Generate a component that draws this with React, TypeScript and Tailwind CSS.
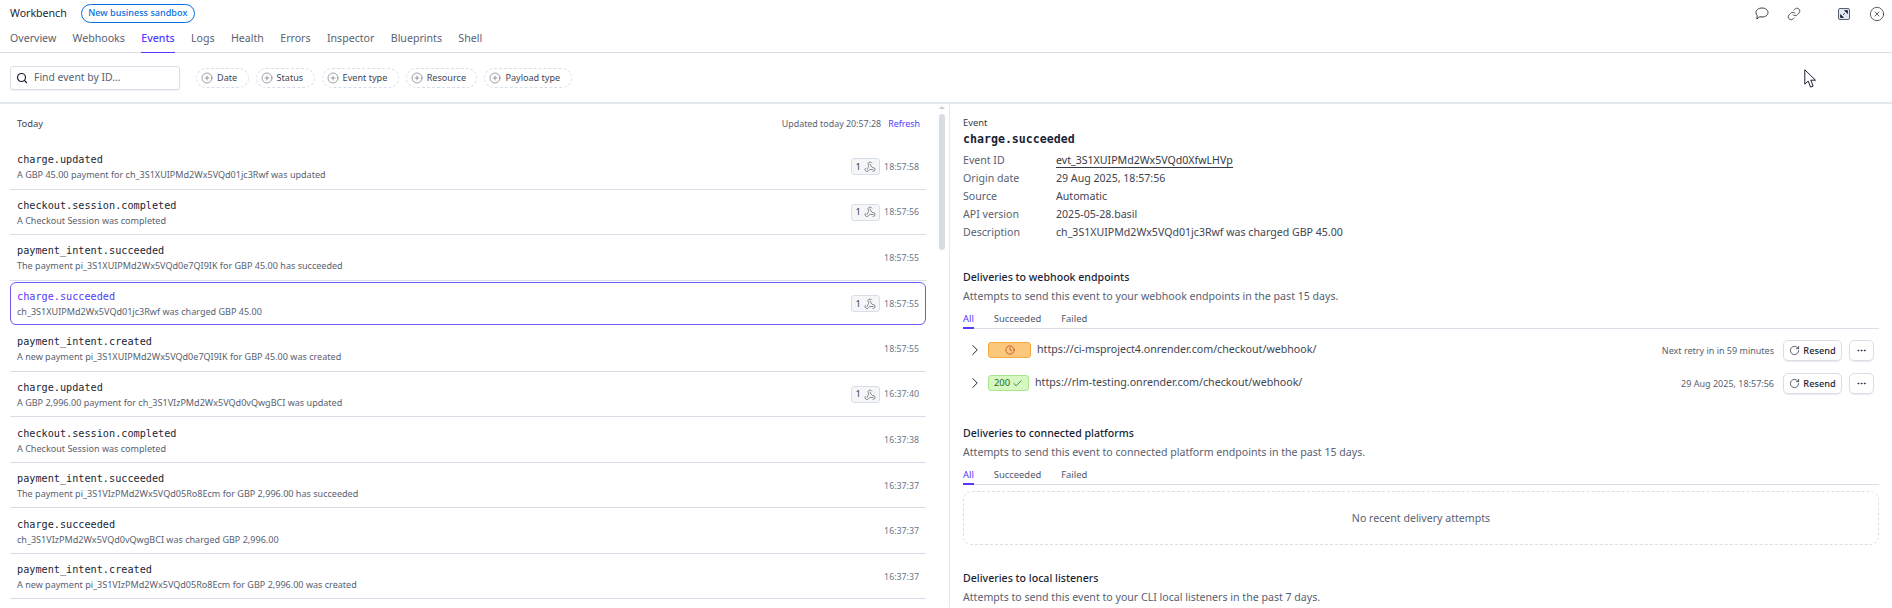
import { Search, CirclePlus, Webhook, ChevronRight, Clock, Check, RotateCw, Ellipsis, Link, CircleX } from "lucide-react";

const tabs = ["Overview", "Webhooks", "Events", "Logs", "Health", "Errors", "Inspector", "Blueprints", "Shell"];
const filters = ["Date", "Status", "Event type", "Resource", "Payload type"];

const events = [
  { name: "charge.updated", desc: "A GBP 45.00 payment for ch_3S1XUIPMd2Wx5VQd01jc3Rwf was updated", time: "18:57:58", hook: true },
  { name: "checkout.session.completed", desc: "A Checkout Session was completed", time: "18:57:56", hook: true },
  { name: "payment_intent.succeeded", desc: "The payment pi_3S1XUIPMd2Wx5VQd0e7QI9IK for GBP 45.00 has succeeded", time: "18:57:55", hook: false },
  { name: "charge.succeeded", desc: "ch_3S1XUIPMd2Wx5VQd01jc3Rwf was charged GBP 45.00", time: "18:57:55", hook: true, active: true },
  { name: "payment_intent.created", desc: "A new payment pi_3S1XUIPMd2Wx5VQd0e7QI9IK for GBP 45.00 was created", time: "18:57:55", hook: false },
  { name: "charge.updated", desc: "A GBP 2,996.00 payment for ch_3S1VIzPMd2Wx5VQd0vQwgBCI was updated", time: "16:37:40", hook: true },
  { name: "checkout.session.completed", desc: "A Checkout Session was completed", time: "16:37:38", hook: false },
  { name: "payment_intent.succeeded", desc: "The payment pi_3S1VIzPMd2Wx5VQd05Ro8Ecm for GBP 2,996.00 has succeeded", time: "16:37:37", hook: false },
  { name: "charge.succeeded", desc: "ch_3S1VIzPMd2Wx5VQd0vQwgBCI was charged GBP 2,996.00", time: "16:37:37", hook: false },
  { name: "payment_intent.created", desc: "A new payment pi_3S1VIzPMd2Wx5VQd05Ro8Ecm for GBP 2,996.00 was created", time: "16:37:37", hook: false },
];

const details = [
  ["Event ID", "evt_3S1XUIPMd2Wx5VQd0XfwLHVp"],
  ["Origin date", "29 Aug 2025, 18:57:56"],
  ["Source", "Automatic"],
  ["API version", "2025-05-28.basil"],
  ["Description", "ch_3S1XUIPMd2Wx5VQd01jc3Rwf was charged GBP 45.00"],
];

function SubTabs() {
  return (
    <div className="flex gap-[20px] h-[20px] border-b border-[#d8dee8] text-[9.4px] leading-[20px] text-[#4f566b]">
      <span className="h-[20px] border-b-2 border-[#533afd] text-[#533afd]">All</span>
      <span>Succeeded</span>
      <span>Failed</span>
    </div>
  );
}

function SectionHead({ title, desc }: { title: string; desc: string }) {
  return (
    <>
      <h3 className="h-[19px] leading-[19px] text-[10.6px] font-medium text-[#1a1f36]">{title}</h3>
      <p className="h-[19px] leading-[19px] text-[10.6px] text-[#596171]">{desc}</p>
    </>
  );
}

function DeliveryRow({ badge, url, meta }: { badge: React.ReactNode; url: string; meta: string }) {
  return (
    <div className="flex items-center h-[33px] pl-[3px] pr-[5px]">
      <ChevronRight size={18} strokeWidth={1.3} className="text-[#1a1f36] mr-[4px] shrink-0" />
      {badge}
      <span className="ml-[6px] text-[10.65px] text-[#414552]">{url}</span>
      <span className="ml-auto text-[9px] text-[#596171]">{meta}</span>
      <button className="ml-[9px] flex items-center gap-[3px] h-[21px] w-[59px] justify-center rounded-[5px] border border-[#d8dee8] shadow-[0_1px_1px_rgba(0,0,0,0.08)] text-[9.2px] text-[#1a1f36] font-medium">
        <RotateCw size={11} strokeWidth={1.5} />
        Resend
      </button>
      <button className="ml-[7px] flex items-center justify-center h-[21px] w-[25px] rounded-[5px] border border-[#d8dee8] shadow-[0_1px_1px_rgba(0,0,0,0.08)] text-[#1a1f36]">
        <Ellipsis size={11} strokeWidth={1.8} />
      </button>
    </div>
  );
}

export default function App() {
  return (
    <div className="relative w-[1892px] h-[608px] overflow-hidden bg-white text-[#353a44] font-['Noto_Sans',sans-serif]">
      {/* header */}
      <header className="h-[53px] border-b border-[#d8dee8] pl-[10px] pr-[7px]">
        <div className="flex items-center h-[26px] pt-[1px]">
          <span className="text-[10.6px] text-[#1a1f36]">Workbench</span>
          <span className="ml-[14px] h-[19px] leading-[16px] px-[6.5px] rounded-full border-[1.5px] border-[#0570de] text-[9.1px] font-medium text-[#0570de]">New business sandbox</span>
          <div className="ml-auto flex items-center text-[#353a44]">
            <svg width="14" height="13" viewBox="0 0 14 13" fill="none" stroke="currentColor" strokeWidth="1" className="mr-[17.5px]">
              <path d="M7 1c3.3 0 6 1.9 6 4.5S10.3 10 7 10c-.8 0-1.5-.1-2.2-.3L1.800 12l.5-3.200C1.500 7.900 1 6.800 1 5.500 1 2.900 3.700 1 7 1z" />
            </svg>
            <Link size={14} strokeWidth={1.4} className="mr-[37.5px]" />
            <span className="w-[12px] h-[12px] rounded-[2px] border border-[#596171] bg-[#e3e8ee] flex items-center justify-center mr-[19px]">
              <svg width="8" height="8" viewBox="0 0 8 8" fill="#1a1f36"><path d="M7.5.5v3L4.6.5zM.5 7.5v-3l3 3zM3 5L5 3" stroke="#1a1f36" strokeWidth=".7" /></svg>
            </span>
            <CircleX size={16} strokeWidth={1.2} />
          </div>
        </div>
        <nav className="flex gap-[16.4px] h-[27px] text-[10.6px] text-[#596171]">
          {tabs.map((t) => (
            <span key={t} className={t === "Events" ? "h-[27px] leading-[24px] border-b border-[#533afd] text-[#533afd] font-medium" : "leading-[24px]"}>{t}</span>
          ))}
        </nav>
      </header>

      {/* filters */}
      <div className="flex items-center h-[51px] border-b-2 border-[#e3e8ee] pl-[10px]">
        <div className="flex items-center w-[170px] h-[24px] rounded-[3px] border border-[#d8dee8] shadow-[0_1px_1px_rgba(0,0,0,0.05)] pl-[4.5px]">
          <Search size={12} strokeWidth={2.4} className="text-[#1a1f36]" />
          <span className="ml-[6.5px] text-[10.4px] text-[#596171]">Find event by ID...</span>
        </div>
        <div className="flex gap-[7px] ml-[16px]">
          {filters.map((f) => (
            <span key={f} className="flex items-center h-[20px] pl-[4px] pr-[10.4px] gap-[4px] rounded-full border border-dashed border-[#d8dee8] text-[9.1px] text-[#414552]">
              <CirclePlus size={12} strokeWidth={1} className="text-[#414552]" />
              {f}
            </span>
          ))}
        </div>
      </div>

      <div className="flex h-[503px]">
        {/* event list */}
        <div className="relative w-[950px] shrink-0 border-r border-[#e3e8ee] pl-[10px] pr-[23px]">
          <div className="flex items-center justify-between h-[40px] pl-[7px] pr-[6px] text-[8.9px] text-[#596171]">
            <span className="text-[9.4px] text-[#414552]">Today</span>
            <span>Updated today 20:57:28<span className="ml-[7px] text-[#533afd]">Refresh</span></span>
          </div>
          {events.map((e, i) => (
            <div key={i} className={e.active ? "relative h-[45.56px] flex items-center pt-[3px] px-[7px]" : "h-[45.56px] flex items-center pt-[3px] px-[7px] border-b border-[#d8dee8]"}>
              {e.active && <div className="absolute left-0 right-0 top-[1.5px] bottom-[1.5px] rounded-[6px] border border-[#6c5cf5]" />}
              <div className="min-w-0 flex-1">
                <div className={"font-['DejaVu_Sans_Mono',monospace] text-[10.2px] leading-[15px] " + (e.active ? "text-[#533afd]" : "text-[#1a1f36]")}>{e.name}</div>
                <div className="text-[9.05px] leading-[16px] text-[#596171]">{e.desc}</div>
              </div>
              {e.hook && (
                <span className="flex items-center gap-[3px] justify-center w-[29px] h-[17px] -mt-[2px] rounded-[3px] border border-[#d8dee8] bg-[#f5f6f8] text-[9.4px] text-[#414552] mr-[4px]">
                  1<Webhook size={12} strokeWidth={1.2} />
                </span>
              )}
              <span className="-mt-[1px] text-[8.8px] text-[#6c7688]">{e.time}</span>
            </div>
          ))}
          <div className="absolute top-[1px] right-[1px] w-[12px] h-[502px] flex flex-col items-center">
            <span className="mt-[1px] w-0 h-0 border-x-[3px] border-x-transparent border-b-[3px] border-b-[#c6ccd6]" />
            <span className="mt-[5px] w-[6px] h-[136px] rounded-full bg-[#d8dce3]" />
          </div>
        </div>

        {/* event detail */}
        <div className="flex-1 pl-[13px] pr-[13px] pt-[12px]">
          <div className="text-[9.4px] leading-[14px] text-[#353a44]">Event</div>
          <div className="font-['DejaVu_Sans_Mono',monospace] font-bold text-[11.6px] leading-[18px] text-[#1a1f36]">charge.succeeded</div>
          <div className="mt-[4px]">
            {details.map(([k, v], i) => (
              <div key={k} className="flex h-[17.9px] items-center text-[10.6px]">
                <span className="w-[93px] text-[#596171]">{k}</span>
                <span className={i === 0 ? "text-[#353a44] border-b border-[#353a44] leading-[14px]" : "text-[#414552]"}>{v}</span>
              </div>
            ))}
          </div>

          <div className="mt-[27px]"><SectionHead title="Deliveries to webhook endpoints" desc="Attempts to send this event to your webhook endpoints in the past 15 days." /></div>
          <div className="mt-[3px]"><SubTabs /></div>
          <div className="mt-[4.5px]">
            <DeliveryRow
              url="https://ci-msproject4.onrender.com/checkout/webhook/"
              meta="Next retry in in 59 minutes"
              badge={<span className="flex items-center justify-center w-[43px] h-[16px] rounded-[3px] border border-[#f5a742] bg-[#fcc97c] text-[#b3261e]"><Clock size={10} strokeWidth={1.6} /></span>}
            />
            <DeliveryRow
              url="https://rlm-testing.onrender.com/checkout/webhook/"
              meta="29 Aug 2025, 18:57:56"
              badge={<span className="flex items-center justify-center gap-[2px] w-[41px] h-[16px] rounded-[3px] border border-[#a8e68b] bg-[#d7f7c2] text-[9.4px] text-[#216e1f]">200<Check size={11} strokeWidth={1.8} /></span>}
            />
          </div>

          <div className="mt-[24.5px]"><SectionHead title="Deliveries to connected platforms" desc="Attempts to send this event to connected platform endpoints in the past 15 days." /></div>
          <div className="mt-[3px]"><SubTabs /></div>
          <div className="mt-[6px] h-[54px] rounded-[9px] border border-dashed border-[#d8dee8] flex items-center justify-center text-[10.6px] text-[#596171]">No recent delivery attempts</div>

          <div className="mt-[24px]"><SectionHead title="Deliveries to local listeners" desc="Attempts to send this event to your CLI local listeners in the past 7 days." /></div>
        </div>
      </div>

      {/* mouse pointer in the capture */}
      <svg className="absolute left-[1804px] top-[69px]" width="13" height="20" viewBox="0 0 13 20" fill="white" stroke="#1a1f36" strokeWidth="1">
        <path d="M.8.8v14.4l3.4-3.1 2.4 6 2.6-1-2.400-5.900h4.700z" />
      </svg>
    </div>
  );
}
